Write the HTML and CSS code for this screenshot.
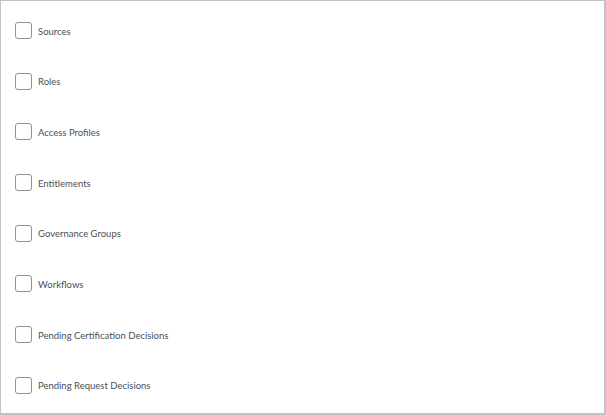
FILE: index.html
```html
<!DOCTYPE html>
<html lang="en">
<head>
    <meta charset="UTF-8">
    <title>Object Types</title>
    <link rel="stylesheet" href="styles.css">
</head>
<body>
    <div class="panel">
        <ul class="type-list">
            <li class="type-item"><label><input type="checkbox"><span class="box"></span><span class="label-text">Sources</span></label></li>
            <li class="type-item"><label><input type="checkbox"><span class="box"></span><span class="label-text">Roles</span></label></li>
            <li class="type-item"><label><input type="checkbox"><span class="box"></span><span class="label-text">Access Profiles</span></label></li>
            <li class="type-item"><label><input type="checkbox"><span class="box"></span><span class="label-text">Entitlements</span></label></li>
            <li class="type-item"><label><input type="checkbox"><span class="box"></span><span class="label-text">Governance Groups</span></label></li>
            <li class="type-item"><label><input type="checkbox"><span class="box"></span><span class="label-text">Workflows</span></label></li>
            <li class="type-item"><label><input type="checkbox"><span class="box"></span><span class="label-text">Pending Certification Decisions</span></label></li>
            <li class="type-item"><label><input type="checkbox"><span class="box"></span><span class="label-text">Pending Request Decisions</span></label></li>
        </ul>
    </div>
</body>
</html>
```

FILE: styles.css
```css
html, body {
    margin: 0;
    padding: 0;
    background: #fff;
}
body {
    font-family: Lato, "Open Sans", sans-serif;
    color: #4a4f55;
}
.panel {
    box-sizing: border-box;
    width: 606px;
    height: 415px;
    border: 1px solid #c2c2c2;
    border-right-width: 2px;
    border-bottom-width: 2px;
}
.type-list {
    list-style: none;
    margin: 0;
    padding: 21px 0 0 14px;
    display: flex;
    flex-direction: column;
    gap: 33.7px;
}
.type-item label {
    display: flex;
    align-items: center;
    height: 17px;
    cursor: pointer;
}
.type-item input {
    display: none;
}
.box {
    box-sizing: border-box;
    width: 17px;
    height: 17px;
    border: 1px solid #8c9299;
    border-radius: 3px;
    background: #fff;
}
.label-text {
    margin-left: 6px;
    font-size: 9.5px;
    line-height: 17px;
    padding-top: 1px;
}
```
